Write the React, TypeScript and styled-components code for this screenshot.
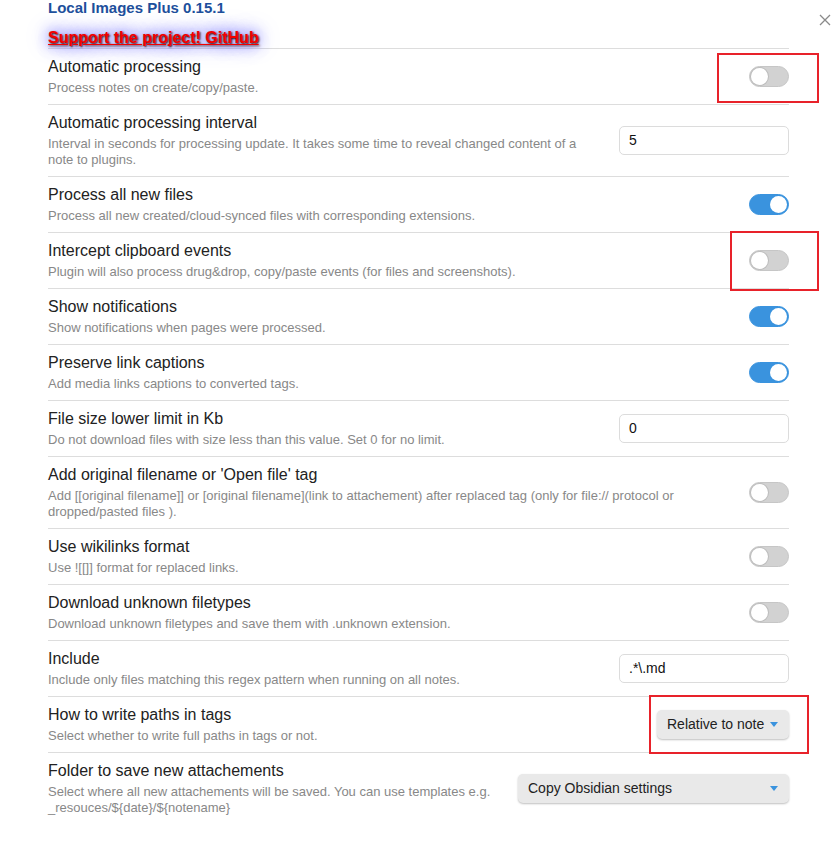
import styled, { createGlobalStyle } from 'styled-components'

const GlobalStyle = createGlobalStyle`
  body {
    margin: 0;
    background: #ffffff;
    font-family: "Liberation Sans", Arial, sans-serif;
  }
`

type SettingControl =
  | { kind: 'toggle'; on: boolean }
  | { kind: 'text'; value: string }
  | { kind: 'dropdown'; value: string; wide?: boolean }

interface Setting {
  name: string
  desc: string
  control: SettingControl
}

const settings: Setting[] = [
  {
    name: 'Automatic processing',
    desc: 'Process notes on create/copy/paste.',
    control: { kind: 'toggle', on: false },
  },
  {
    name: 'Automatic processing interval',
    desc: 'Interval in seconds for processing update. It takes some time to reveal changed content of a note to plugins.',
    control: { kind: 'text', value: '5' },
  },
  {
    name: 'Process all new files',
    desc: 'Process all new created/cloud-synced files with corresponding extensions.',
    control: { kind: 'toggle', on: true },
  },
  {
    name: 'Intercept clipboard events',
    desc: 'Plugin will also process drug&drop, copy/paste events (for files and screenshots).',
    control: { kind: 'toggle', on: false },
  },
  {
    name: 'Show notifications',
    desc: 'Show notifications when pages were processed.',
    control: { kind: 'toggle', on: true },
  },
  {
    name: 'Preserve link captions',
    desc: 'Add media links captions to converted tags.',
    control: { kind: 'toggle', on: true },
  },
  {
    name: 'File size lower limit in Kb',
    desc: 'Do not download files with size less than this value. Set 0 for no limit.',
    control: { kind: 'text', value: '0' },
  },
  {
    name: "Add original filename or 'Open file' tag",
    desc: 'Add [[original filename]] or [original filename](link to attachement) after replaced tag (only for file:// protocol or dropped/pasted files ).',
    control: { kind: 'toggle', on: false },
  },
  {
    name: 'Use wikilinks format',
    desc: 'Use ![[]] format for replaced links.',
    control: { kind: 'toggle', on: false },
  },
  {
    name: 'Download unknown filetypes',
    desc: 'Download unknown filetypes and save them with .unknown extension.',
    control: { kind: 'toggle', on: false },
  },
  {
    name: 'Include',
    desc: 'Include only files matching this regex pattern when running on all notes.',
    control: { kind: 'text', value: '.*\\.md' },
  },
  {
    name: 'How to write paths in tags',
    desc: 'Select whether to write full paths in tags or not.',
    control: { kind: 'dropdown', value: 'Relative to note' },
  },
  {
    name: 'Folder to save new attachements',
    desc: 'Select where all new attachements will be saved. You can use templates e.g. _resouces/${date}/${notename}',
    control: { kind: 'dropdown', value: 'Copy Obsidian settings', wide: true },
  },
]

// red annotation boxes drawn over the screenshot
const markers = [
  { l: 717, t: 53, w: 102, h: 50 },
  { l: 730, t: 231, w: 89, h: 60 },
  { l: 649, t: 695, w: 160, h: 59 },
]

const Page = styled.div`
  position: relative;
  width: 832px;
  height: 854px;
  overflow: hidden;
  background: #ffffff;
`

const Content = styled.div`
  width: 741px;
  margin-left: 48px;
`

const Title = styled.div`
  font-size: 15px;
  line-height: 16px;
  font-weight: 700;
  color: #1d4f9c;
`

const SupportLink = styled.a`
  display: inline-block;
  margin-top: 12px;
  font-size: 16px;
  line-height: 20px;
  font-weight: 700;
  color: #f20000;
  text-decoration: underline;
  text-shadow: 1px 1px 2px #2a0000, 0 0 14px #4a48ff, 0 0 26px #8a88ff;
`

const CloseButton = styled.div`
  position: absolute;
  top: 12px;
  right: 1px;
  width: 12px;
  height: 12px;
`

const Item = styled.div`
  display: flex;
  align-items: center;
  gap: 16px;
  border-top: 1px solid #dddddd;
  padding: 7px 0 8px;
`

const Info = styled.div`
  flex: 1 1 auto;
  min-width: 0;
`

const Name = styled.div`
  font-size: 16px;
  line-height: 22px;
  color: #222222;
`

const Desc = styled.div`
  margin-top: 2px;
  font-size: 13px;
  line-height: 16px;
  color: #888888;
`

const ControlSlot = styled.div`
  flex: 0 0 auto;
  display: flex;
  align-items: center;
  justify-content: flex-end;
`

const Switch = styled.div<{ $on: boolean }>`
  width: 40px;
  height: 21px;
  border-radius: 11px;
  box-sizing: border-box;
  padding: 1px;
  display: flex;
  align-items: center;
  justify-content: ${(p) => (p.$on ? 'flex-end' : 'flex-start')};
  background: ${(p) => (p.$on ? '#3a93de' : '#d2d2d2')};
  border: 1px solid ${(p) => (p.$on ? '#3a93de' : '#c6c6c6')};
`

const Knob = styled.div<{ $on: boolean }>`
  width: 17px;
  height: 17px;
  border-radius: 50%;
  background: #ffffff;
  box-shadow: 0 0 0 1px ${(p) => (p.$on ? '#3a93de' : '#bdbdbd')};
`

const TextInput = styled.div`
  width: 170px;
  height: 29px;
  box-sizing: border-box;
  border: 1px solid #dcdcdc;
  border-radius: 5px;
  padding: 0 9px;
  display: flex;
  align-items: center;
  font-size: 14px;
  color: #111111;
`

const Dropdown = styled.div<{ $wide?: boolean }>`
  width: ${(p) => (p.$wide ? '271px' : '132px')};
  height: 29px;
  box-sizing: border-box;
  border-radius: 5px;
  background: #e9e9e9;
  box-shadow: 0 1px 2px rgba(0, 0, 0, 0.25);
  padding: 0 11px 0 10px;
  display: flex;
  align-items: center;
  justify-content: space-between;
  font-size: 14px;
  color: #222222;
`

const Caret = styled.span`
  width: 0;
  height: 0;
  border-left: 4px solid transparent;
  border-right: 4px solid transparent;
  border-top: 5px solid #3a93de;
`

const Marker = styled.div`
  position: absolute;
  box-sizing: border-box;
  border: 2px solid #e8222a;
  pointer-events: none;
`

const Control = ({ control }: { control: SettingControl }) => {
  if (control.kind === 'toggle') {
    return (
      <Switch $on={control.on}>
        <Knob $on={control.on} />
      </Switch>
    )
  }
  if (control.kind === 'text') {
    return <TextInput>{control.value}</TextInput>
  }
  return (
    <Dropdown $wide={control.wide}>
      <span>{control.value}</span>
      <Caret />
    </Dropdown>
  )
}

const App = () => {
  return (
    <Page>
      <GlobalStyle />
      <CloseButton>
        <svg width='12' height='12' viewBox='0 0 12 12'>
          <path d='M1 1 L11 11 M11 1 L1 11' stroke='#8a8a8a' strokeWidth='1.3' />
        </svg>
      </CloseButton>
      <Content>
        <Title>Local Images Plus 0.15.1</Title>
        <SupportLink>Support the project! GitHub</SupportLink>
        {settings.map((s) => (
          <Item key={s.name}>
            <Info>
              <Name>{s.name}</Name>
              <Desc>{s.desc}</Desc>
            </Info>
            <ControlSlot>
              <Control control={s.control} />
            </ControlSlot>
          </Item>
        ))}
      </Content>
      {markers.map((m) => (
        <Marker
          key={`${m.l}-${m.t}`}
          style={{ left: m.l, top: m.t, width: m.w, height: m.h }}
        />
      ))}
    </Page>
  )
}

export default App
